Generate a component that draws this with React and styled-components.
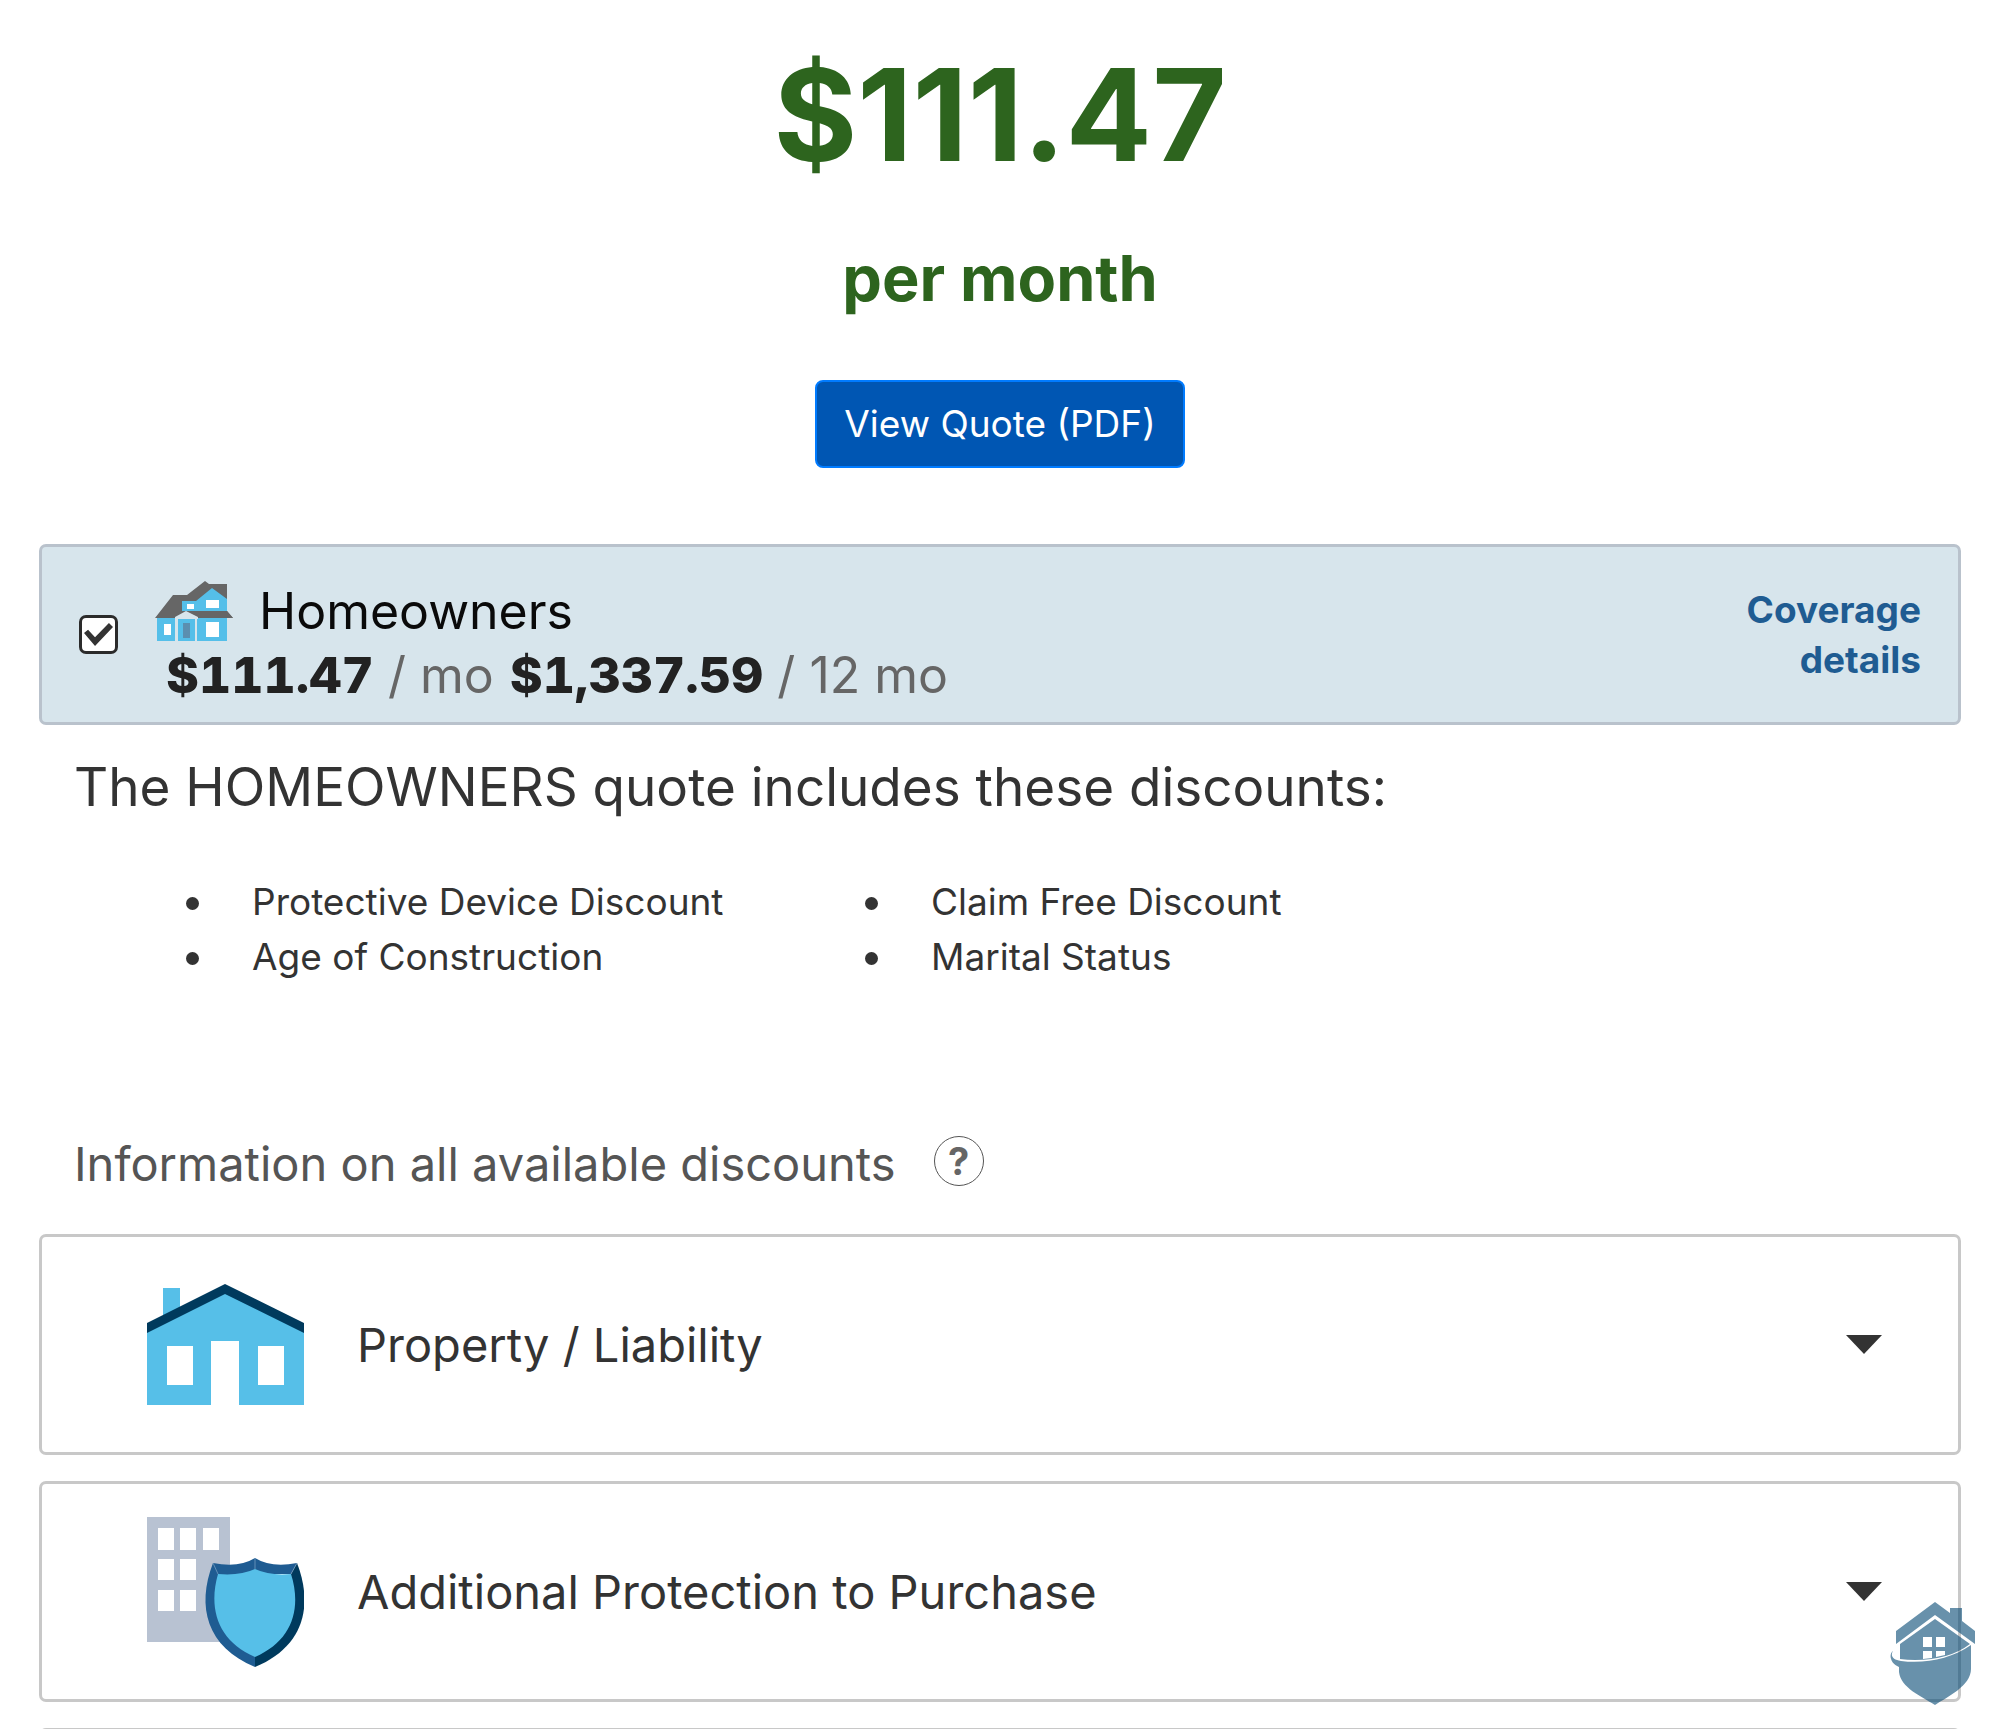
import React, { useState } from "react";
import styled, { createGlobalStyle } from "styled-components";

const GlobalStyle = createGlobalStyle`
  *, *::before, *::after { box-sizing: border-box; }
  body {
    margin: 0;
    background: #fff;
    color: #333;
    font-family: Inter, "Liberation Sans", sans-serif;
  }
`;

const Page = styled.main`
  height: 100vh;
  overflow: hidden;
  padding: 40px 39px 0;
`;

const Hero = styled.header`
  display: flex;
  flex-direction: column;
  align-items: center;
  color: #2d641e;
`;

const Price = styled.h1`
  margin: 0;
  font-size: 128px;
  line-height: 150px;
  font-weight: 700;
`;

const Period = styled.p`
  margin: 50px 0 64px;
  font-size: 63px;
  line-height: 76px;
  font-weight: 700;
`;

const QuoteButton = styled.button`
  height: 88px;
  padding: 0 27px;
  border: 2px solid #007bff;
  border-radius: 8px;
  background: #0056b3;
  color: #fff;
  font: 400 37px/50px Inter, "Liberation Sans", sans-serif;
  cursor: pointer;
`;

const PolicyCard = styled.section`
  display: flex;
  align-items: center;
  gap: 37px;
  margin-top: 76px;
  padding: 0 37px;
  border: 3px solid #b9c2cc;
  border-radius: 7px;
  background: #d7e5ec;
`;

const Checkbox = styled.input`
  appearance: none;
  flex: none;
  display: grid;
  place-items: center;
  width: 39px;
  height: 39px;
  margin: 0;
  border: 3px solid #2b2b2b;
  border-radius: 7px;
  background: #fff;

  &:checked::before {
    content: "";
    width: 29px;
    height: 23px;
    background: #333;
    clip-path: polygon(0 44%, 14% 29%, 38% 62%, 86% 0, 100% 17%, 38% 100%);
  }
`;

const PolicyBody = styled.div`
  flex: 1;
  padding: 32px 0 15px;
`;

const PolicyName = styled.label`
  display: flex;
  align-items: center;
  gap: 26px;
  color: #0a0a0a;
  font-size: 50px;
  line-height: 64px;
`;

const PriceRow = styled.p`
  display: flex;
  gap: 16px;
  margin: 0;
  padding-left: 11px;
  color: #666;
  font-size: 50px;
  line-height: 64px;

  strong {
    color: #222;
    font-weight: 800;
    font-variant-numeric: tabular-nums;
  }
`;

const DetailsLink = styled.a`
  width: 180px;
  color: #1f5c92;
  font-size: 37px;
  line-height: 50px;
  font-weight: 700;
  text-align: right;
  text-decoration: none;
`;

const Discounts = styled.section`
  padding: 30px 35px 0;
`;

const DiscountsTitle = styled.h2`
  margin: 0;
  font-size: 53px;
  line-height: 64px;
  font-weight: 400;
`;

const DiscountList = styled.ul`
  display: grid;
  grid-template-columns: 679px 1fr;
  margin: 55px 0 0;
  padding: 0 0 0 112px;
  list-style: none;
`;

const Discount = styled.li`
  display: flex;
  align-items: center;
  gap: 53px;
  font-size: 37px;
  line-height: 55px;

  &::before {
    content: "";
    width: 13px;
    height: 13px;
    margin-top: 4px;
    border-radius: 50%;
    background: currentColor;
  }
`;

const InfoRow = styled.div`
  display: flex;
  align-items: flex-start;
  gap: 38px;
  margin: 152px 0 42px;
  padding-left: 35px;
  color: #555;
  font-size: 47px;
  line-height: 56px;
`;

const HelpButton = styled.button`
  width: 50px;
  height: 50px;
  padding: 0;
  border: 1px solid #555;
  border-radius: 50%;
  background: none;
  color: #666;
  font: 700 38px/46px Inter, "Liberation Sans", sans-serif;
  cursor: pointer;
`;

const Panels = styled.div`
  display: flex;
  flex-direction: column;
  gap: 26px;
`;

const Panel = styled.button`
  display: flex;
  align-items: center;
  flex: none;
  width: 100%;
  height: 221px;
  padding: 0 76px 0 104px;
  border: 3px solid #c8c8c8;
  border-radius: 7px;
  background: #fff;
  color: #333;
  font: 400 47px/56px Inter, "Liberation Sans", sans-serif;
  text-align: left;
  cursor: pointer;
`;

const PanelTitle = styled.span`
  flex: 1;
  padding-left: 53px;
`;

const Badge = styled.a`
  position: fixed;
  right: 25px;
  bottom: 24px;
  line-height: 0;
`;

const VillaIcon = () => (
  <svg width="78" height="60" viewBox="0 0 78 60" aria-hidden="true">
    <path fill="#666" d="M0 37 18 14H32L50 0 54 3H72V30L78 37Z" />
    <path fill="#55bfe9" d="M27 20H41L57 7 72 18V30H27Z" />
    <path fill="#666" d="M26 30H72L78 37H26Z" />
    <path fill="#55bfe9" d="M2 37H72V60H2Z" />
    <path fill="#d7e5ec" d="M20 36 31 30 43 36V38H42V60H40V38H23V60H20Z" />
    <path fill="#5b8fb0" d="M28 42H35V57H28Z" />
    <path fill="#fff" d="M51 19H64V27H51ZM32 23H39V28H32ZM9 43H16V54H9ZM51 41H64V56H51Z" />
  </svg>
);

const HouseIcon = () => (
  <svg width="158" height="122" viewBox="0 0 158 122" aria-hidden="true">
    <path fill="#56bfe8" d="M17 4H34V40H17Z" />
    <path fill="#56bfe8" fillRule="evenodd" d="M1 44 79 5 158 44V121H93V57H65V121H1ZM21 62V101H47V62ZM112 62V101H138V62Z" />
    <path fill="#003a5d" d="M1 39 79 0 158 39V49L79 10 1 49Z" />
  </svg>
);

const ShieldIcon = () => (
  <svg width="158" height="150" viewBox="0 0 158 150" aria-hidden="true">
    <path
      fill="#b8c2d2"
      fillRule="evenodd"
      d="M1 0H84V125H1ZM12 11V33H28V11ZM34 11V33H50V11ZM57 11V33H73V11ZM12 42V63H28V42ZM34 42V63H50V42ZM12 73V94H28V73ZM34 73V94H50V73Z"
    />
    <path fill="#1f5c92" d="M109 41Q93 51 67 46C50 90 61 130 109 150Z" />
    <path fill="#1f5c92" d="M109 41Q125 51 151 46L145 57H109Z" />
    <path fill="#003a5d" d="M151 46C168 90 157 130 109 150V138L145 57Z" />
    <path fill="#56bfe8" d="M109 52Q94 59 72 57C62 92 72 124 109 140 146 124 156 92 145 57Q124 59 109 52Z" />
    <path fill="none" stroke="#7ea4c6" strokeWidth="0.7" d="M109 41V52M67 46L72 57M151 46L145 57" />
  </svg>
);

const Caret = () => (
  <svg width="36" height="19" viewBox="0 0 36 19" aria-hidden="true">
    <path fill="#333" d="M0 0H36L18 19Z" />
  </svg>
);

const BadgeIcon = () => (
  <svg width="86" height="103" viewBox="0 0 86 103" aria-hidden="true">
    <g fill="#034873" fillOpacity="0.6">
      <path d="M7 29 46 0 61 11V6H73V19L86 29V42L46 13 7 42Z" />
      <path
        fillRule="evenodd"
        d="M11 42 46 17 81 42Q60 58 26 58 18 58 11 57ZM34 35V45H43V35ZM47 35V45H56V35ZM34 49V57L43 56V49ZM47 49V55L56 53V49Z"
      />
      <path d="M4 49C-1 53 2 62 10 65V70C12 86 32 94 46 103 58 95 82 84 82 67V43C62 57 36 62 12 59 4 58 1 54 4 49Z" />
    </g>
  </svg>
);

const discounts = [
  "Protective Device Discount",
  "Claim Free Discount",
  "Age of Construction",
  "Marital Status",
];

export default function App() {
  const [selected, setSelected] = useState(true);

  return (
    <>
      <GlobalStyle />
      <Page>
        <Hero>
          <Price>$111.47</Price>
          <Period>per month</Period>
          <QuoteButton type="button">View Quote (PDF)</QuoteButton>
        </Hero>

        <PolicyCard>
          <Checkbox
            id="homeowners"
            type="checkbox"
            checked={selected}
            onChange={(event) => setSelected(event.target.checked)}
          />
          <PolicyBody>
            <PolicyName htmlFor="homeowners">
              <VillaIcon />
              Homeowners
            </PolicyName>
            <PriceRow>
              <span><strong>$111.47</strong> / mo</span>
              <span><strong>$1,337.59</strong> / 12 mo</span>
            </PriceRow>
          </PolicyBody>
          <DetailsLink href="#coverage">Coverage details</DetailsLink>
        </PolicyCard>

        <Discounts>
          <DiscountsTitle>The HOMEOWNERS quote includes these discounts:</DiscountsTitle>
          <DiscountList>
            {discounts.map((name) => (
              <Discount key={name}>{name}</Discount>
            ))}
          </DiscountList>
        </Discounts>

        <InfoRow>
          <span>Information on all available discounts</span>
          <HelpButton type="button">?</HelpButton>
        </InfoRow>

        <Panels>
          <Panel type="button">
            <HouseIcon />
            <PanelTitle>Property / Liability</PanelTitle>
            <Caret />
          </Panel>
          <Panel type="button">
            <ShieldIcon />
            <PanelTitle>Additional Protection to Purchase</PanelTitle>
            <Caret />
          </Panel>
          <Panel as="div" />
        </Panels>

        <Badge href="#home" aria-label="Home">
          <BadgeIcon />
        </Badge>
      </Page>
    </>
  );
}
